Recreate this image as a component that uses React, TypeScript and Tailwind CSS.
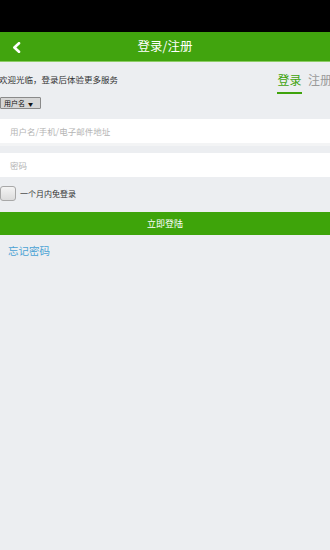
import React from "react";

export default function App() {
  const font = { fontFamily: '"Noto Sans CJK SC", "Noto Sans", sans-serif' };
  return (
    <div className="w-[330px] h-[550px] bg-[#eceef1] overflow-hidden flex flex-col" style={font}>
      <div className="h-[32px] bg-black shrink-0" />
      <div className="h-[29px] bg-[#41a40e] shrink-0 relative flex items-center justify-center">
        <svg className="absolute left-[12px] top-[10px]" width="9" height="11" viewBox="0 0 9 11">
          <path d="M7 1.2 L2.4 5.5 L7 9.8" fill="none" stroke="#fff" strokeWidth="2.6" strokeLinecap="round" strokeLinejoin="round" />
        </svg>
        <span className="text-white text-[12.5px] leading-none">登录/注册</span>
      </div>
      <div className="h-[1px] bg-[#8ccc66] shrink-0" />
      <div className="flex items-start justify-between h-[34px] shrink-0">
        <span className="text-[8.5px] text-[#333] leading-none mt-[13px] ml-[-1px]">欢迎光临，登录后体验更多服务</span>
        <div className="flex items-start mt-[12px] gap-[6px] mr-[-2px]">
          <div className="flex flex-col items-center">
            <span className="text-[12px] leading-none text-[#3fa30c]">登录</span>
            <div className="w-[25px] h-[2px] bg-[#3fa30c] mt-[6px]" />
          </div>
          <span className="text-[12px] leading-none text-[#9a9a9a]">注册</span>
        </div>
      </div>
      <div className="h-[23px] shrink-0 pt-[1px]">
        <div className="w-[41px] h-[12px] bg-[#d6d6d6] border border-[#8a8a8a] rounded-[1px] flex items-center pl-[3px] gap-[3px]">
          <span className="text-[7px] leading-none text-[#111]">用户名</span>
          <span className="text-[5px] leading-none text-[#111]">▼</span>
        </div>
      </div>
      <div className="h-[24px] bg-white shrink-0 flex items-center pl-[10px]">
        <span className="text-[8.5px] leading-none text-[#b4b4b4]">用户名/手机/电子邮件地址</span>
      </div>
      <div className="h-[3px] bg-[#f3f4f5] shrink-0" />
      <div className="h-[7px] shrink-0" />
      <div className="h-[24px] bg-white shrink-0 flex items-center pl-[10px]">
        <span className="text-[8.5px] leading-none text-[#b4b4b4]">密码</span>
      </div>
      <div className="h-[35px] shrink-0 flex items-start pt-[9px]">
        <div className="w-[16px] h-[15px] rounded-[3px] border border-[#a8a8a8] bg-gradient-to-b from-[#f4f4f4] to-[#dcdcdc]" />
        <span className="text-[8px] leading-none text-[#333] ml-[4px] mt-[4px]">一个月内免登录</span>
      </div>
      <div className="h-[23px] bg-[#3ea40a] shrink-0 flex items-center justify-center">
        <span className="text-[9px] leading-none text-white">立即登陆</span>
      </div>
      <div className="flex pl-[8px] pt-[11px] leading-none">
        <span className="text-[10.5px] leading-none text-[#4aa2d4]">忘记密码</span>
      </div>
    </div>
  );
}
